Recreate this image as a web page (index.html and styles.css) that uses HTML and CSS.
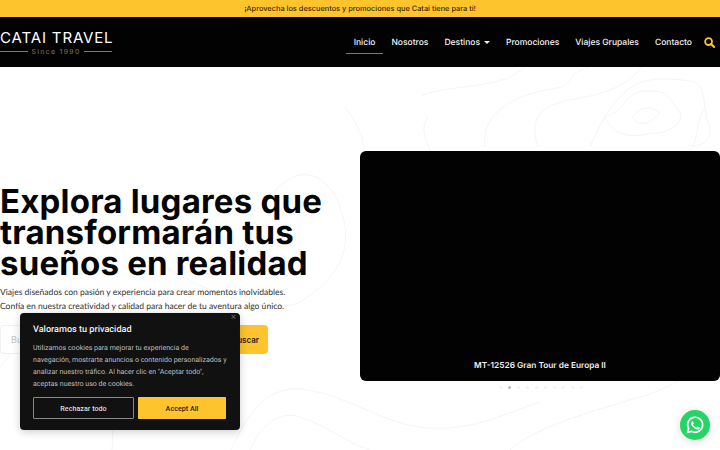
FILE: index.html
```html
<!DOCTYPE html>
<html lang="es">
<head>
    <meta charset="UTF-8">
    <title>Catai Travel</title>
    <link rel="stylesheet" href="styles.css">
</head>
<body>
    <div class="promo-bar">¡Aprovecha los descuentos y promociones que Catai tiene para ti!</div>

    <header class="site-header">
        <a href="#" class="logo">
            <span class="logo-name">CATAI TRAVEL</span>
            <span class="logo-since">Since 1990</span>
        </a>
        <nav class="main-nav">
            <a href="#" class="nav-link active">Inicio</a>
            <a href="#" class="nav-link">Nosotros</a>
            <a href="#" class="nav-link">Destinos <span class="caret"></span></a>
            <a href="#" class="nav-link">Promociones</a>
            <a href="#" class="nav-link">Viajes Grupales</a>
            <a href="#" class="nav-link">Contacto</a>
            <a href="#" class="search-link" aria-label="Buscar">
                <svg viewBox="0 0 24 24" width="11" height="11">
                    <circle cx="10" cy="10" r="7.5" fill="none" stroke="#fec42d" stroke-width="4"/>
                    <path d="M15.5 15.5L22 22" stroke="#fec42d" stroke-width="4.5" stroke-linecap="round"/>
                </svg>
            </a>
        </nav>
    </header>

    <main class="hero">
        <!-- curvas de nivel del fondo -->
        <svg class="contours" viewBox="0 0 720 383" fill="none" stroke="#f5f5f5" stroke-width="1">
            <path d="M422 28C460 16 505 22 524 0"/>
            <path d="M485 80C480 50 510 28 552 22C580 18 560 8 590 0"/>
            <path d="M538 80C530 55 535 38 575 32C600 28 630 20 645 -5"/>
            <path d="M590 80C598 62 605 45 620 30C640 6 670 12 690 14C708 16 702 40 708 55C716 72 700 82 688 78"/>
            <path d="M605 50C625 45 625 22 650 24C670 22 672 38 680 45C685 60 660 68 650 66C632 72 612 68 605 50Z"/>
            <path d="M632 50C640 40 650 38 660 46C652 55 640 62 632 50Z"/>
            <path d="M345 40C360 60 362 70 365 84"/>
            <path d="M705 40C695 55 700 70 690 84"/>
            <path d="M430 84C425 70 420 62 428 50"/>
            <path d="M230 385C250 340 270 320 300 322"/>
            <path d="M300 322C340 325 380 355 420 360C470 368 520 340 540 335"/>
            <path d="M0 300C30 260 60 250 90 275C110 300 115 340 112 383"/>
            <path d="M250 383C265 350 285 345 300 350C330 360 345 375 370 383"/>
            <path d="M270 130C300 90 330 110 340 140C355 180 340 210 300 235C270 250 200 225 150 190"/>
            <path d="M510 383C535 360 590 345 640 330C680 318 705 300 720 270"/>
            <path d="M90 250C150 260 210 300 240 285"/>
        </svg>

        <section class="hero-text">
            <h1 class="hero-title">Explora lugares que transformarán tus sueños en realidad</h1>
            <p class="hero-copy">Viajes diseñados con pasión y experiencia para crear momentos inolvidables.<br>Confía en nuestra creatividad y calidad para hacer de tu aventura algo único.</p>
            <form class="search-form">
                <input class="search-input" type="text" placeholder="Buscar destino">
                <button class="search-button" type="button">Buscar</button>
            </form>
        </section>

        <section class="slider">
            <div class="slide">
                <div class="slide-title">MT-12526 Gran Tour de Europa II</div>
            </div>
            <div class="slider-dots">
                <span class="dot"></span>
                <span class="dot active"></span>
                <span class="dot"></span>
                <span class="dot"></span>
                <span class="dot"></span>
                <span class="dot"></span>
                <span class="dot"></span>
                <span class="dot"></span>
                <span class="dot"></span>
                <span class="dot"></span>
            </div>
        </section>
    </main>

    <!-- aviso de cookies -->
    <div class="cookie-box">
        <span class="cookie-close">×</span>
        <div class="cookie-title">Valoramos tu privacidad</div>
        <p class="cookie-text">Utilizamos cookies para mejorar tu experiencia de navegación, mostrarte anuncios o contenido personalizados y analizar nuestro tráfico. Al hacer clic en "Aceptar todo", aceptas nuestro uso de cookies.</p>
        <div class="cookie-actions">
            <button class="cookie-button reject">Rechazar todo</button>
            <button class="cookie-button accept">Accept All</button>
        </div>
    </div>

    <a href="#" class="whatsapp" aria-label="WhatsApp">
        <svg viewBox="0 0 24 24" width="20" height="20">
            <path fill="none" stroke="white" stroke-width="2" d="M3.2 20.8l1.2-4.5A9 9 0 1 1 7.8 19.6z"/>
            <path fill="white" d="M9.2 7.4c-.3 0-.7.1-1 .5-.4.5-.9 1.200-.9 2.300 0 1.300.9 2.500 1.100 2.800.2.200 1.800 2.800 4.400 3.800 2.100.8 2.600.7 3.100.6.500 0 1.500-.6 1.700-1.200.2-.6.2-1.100.1-1.200-.1-.1-.2-.2-.5-.3l-1.800-.9c-.3-.1-.4-.1-.6.100l-.8 1c-.2.200-.3.200-.6.1-1.100-.5-2.700-1.500-3.700-3.300-.1-.3 0-.4.100-.5l.7-.9c.1-.2.100-.3 0-.5l-.8-1.900c-.2-.5-.4-.5-.6-.5z"/>
        </svg>
    </a>
</body>
</html>
```

FILE: styles.css
```css
* {
    margin: 0;
    padding: 0;
    box-sizing: border-box;
}

html, body {
    height: 100%;
    overflow: hidden;
}

body {
    background: white;
    font-family: Inter, "Liberation Sans", sans-serif;
    text-rendering: geometricPrecision;
    display: flex;
    flex-direction: column;
    position: relative;
}

a {
    text-decoration: none;
}

.promo-bar {
    height: 17px;
    background: #fec42d;
    color: #3a2a05;
    font-size: 7.4px;
    font-weight: 500;
    line-height: 17px;
    text-align: center;
}

.site-header {
    height: 50px;
    background: #020202;
    display: flex;
    align-items: center;
    justify-content: space-between;
}

.logo {
    display: flex;
    flex-direction: column;
    width: 112px;
    margin-top: 1px;
}

.logo-name {
    color: white;
    font-size: 15px;
    line-height: 17.5px;
    letter-spacing: 0.85px;
    white-space: nowrap;
}

.logo-since {
    display: flex;
    align-items: center;
    gap: 3px;
    color: #8f7a45;
    font-size: 6.8px;
    line-height: 9px;
    letter-spacing: 1.4px;
    white-space: nowrap;
}

.logo-since::before,
.logo-since::after {
    content: "";
    flex: 1;
    height: 1px;
    background: #8f7a45;
}

.main-nav {
    display: flex;
    align-items: center;
    height: 100%;
    padding-right: 5px;
}

.nav-link {
    color: #f2f2f2;
    font-size: 8.5px;
    font-weight: 500;
    line-height: 20px;
    padding: 2px 8px 0;
    white-space: nowrap;
    display: flex;
    align-items: center;
    gap: 4px;
    border-bottom: 1px solid transparent;
}

.nav-link.active {
    border-bottom-color: #777;
}

.caret {
    width: 0;
    height: 0;
    border-left: 3px solid transparent;
    border-right: 3px solid transparent;
    border-top: 3px solid #f2f2f2;
}

.search-link {
    display: flex;
    margin-left: 4px;
}

.hero {
    flex: 1;
    display: flex;
    align-items: flex-start;
    position: relative;
}

.contours {
    position: absolute;
    left: 0;
    top: 0;
    width: 720px;
    height: 383px;
}

.hero-text {
    width: 360px;
    padding-top: 119px;
    position: relative;
}

.hero-title {
    font-size: 33px;
    font-weight: 700;
    line-height: 31px;
    color: #050505;
    letter-spacing: 0.2px;
    margin-bottom: 6px;
    width: 340px;
}

.hero-copy {
    font-family: Lato, sans-serif;
    font-size: 8.55px;
    line-height: 14px;
    color: #333;
    margin-bottom: 12px;
}

.search-form {
    display: flex;
    width: 268px;
    height: 29px;
}

.search-input {
    flex: 1;
    min-width: 0;
    border: 1px solid #f0f0f0;
    border-right: none;
    border-radius: 4px 0 0 4px;
    padding-left: 10px;
    font-family: Inter, sans-serif;
    font-size: 9px;
    outline: none;
}

.search-input::placeholder {
    color: #c4c4c4;
}

.search-button {
    width: 60px;
    border: none;
    border-radius: 4px;
    background: #fec42d;
    color: #222;
    font-family: Inter, sans-serif;
    font-size: 8px;
    font-weight: 600;
    text-align: right;
    padding-right: 9px;
}

.slider {
    width: 360px;
    padding-top: 84px;
    position: relative;
}

.slide {
    height: 230px;
    background: #020202;
    border-radius: 6px;
    display: flex;
    align-items: flex-end;
    justify-content: center;
    padding-bottom: 8px;
}

.slide-title {
    color: #f0f0f0;
    font-size: 8.3px;
    font-weight: 600;
    line-height: 14px;
}

.slider-dots {
    display: flex;
    gap: 6px;
    padding: 5px 0 0 139px;
}

.dot {
    width: 3px;
    height: 3px;
    border-radius: 50%;
    background: #f2f2f2;
}

.dot.active {
    background: #bbb;
}

.cookie-box {
    position: absolute;
    left: 20px;
    top: 313px;
    width: 220px;
    height: 117px;
    background: #111;
    border-radius: 4px;
    padding: 11px 13px;
    font-family: Roboto, sans-serif;
    box-shadow: 0 2px 8px rgba(0, 0, 0, 0.2);
}

.cookie-close {
    position: absolute;
    right: 4px;
    top: 0;
    color: #666;
    font-size: 10px;
    line-height: 10px;
}

.cookie-title {
    color: #eee;
    font-size: 9.1px;
    font-weight: 500;
    line-height: 12px;
    margin-bottom: 6px;
}

.cookie-text {
    color: #bdbdbd;
    font-size: 7.05px;
    line-height: 12px;
    margin-bottom: 7px;
}

.cookie-actions {
    display: flex;
    gap: 4px;
}

.cookie-button {
    height: 22px;
    font-family: Roboto, sans-serif;
    font-size: 7.2px;
    font-weight: 500;
    border-radius: 1px;
}

.cookie-button.reject {
    width: 101px;
    background: #111;
    color: #ddd;
    border: 1.5px solid #888;
}

.cookie-button.accept {
    width: 88px;
    background: #fec42d;
    color: #222;
    border: none;
}

.whatsapp {
    position: absolute;
    left: 680px;
    top: 410px;
    width: 30px;
    height: 30px;
    border-radius: 50%;
    background: #25d366;
    display: flex;
    align-items: center;
    justify-content: center;
    box-shadow: 0 2px 8px rgba(0, 0, 0, 0.15);
}
```
